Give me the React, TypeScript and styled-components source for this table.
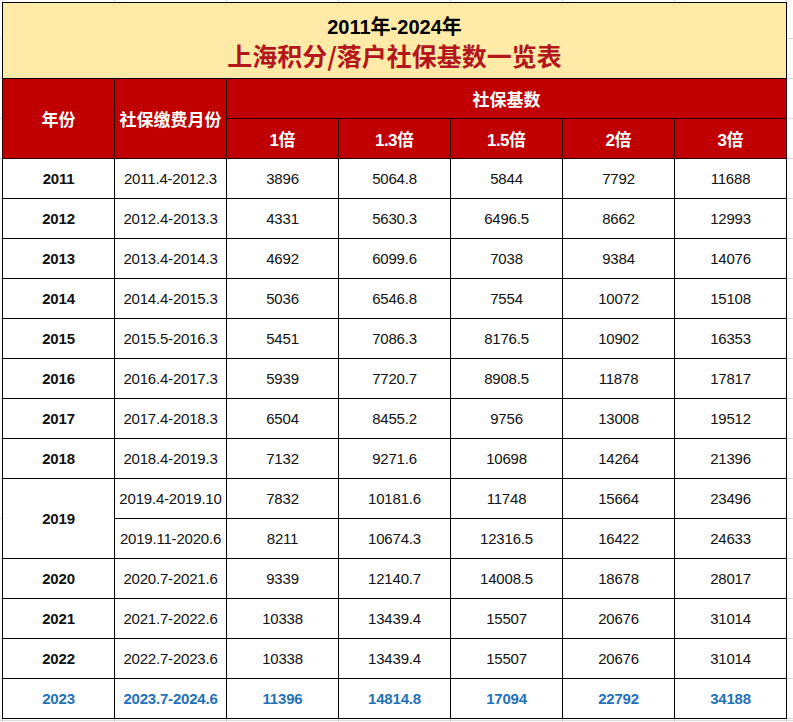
import React from "react";
import styled, { createGlobalStyle } from "styled-components";

const Global = createGlobalStyle`
  html, body { margin: 0; padding: 0; background: #fff; }
  #root { width: 793px; height: 722px; }
`;

const Page = styled.div`
  width: 793px;
  height: 722px;
  box-sizing: border-box;
  padding: 2px 0 0 2px;
  background-color: #fff;
  background-image:
    repeating-linear-gradient(to right, #d9d9d9 0 1px, transparent 1px 112px),
    repeating-linear-gradient(to bottom, #d9d9d9 0 1px, transparent 1px 40px);
  background-position: 2px 0, 0 -2px;
  overflow: hidden;
`;

const Table = styled.table`
  border-collapse: collapse;
  table-layout: fixed;
  width: 785px;
  background: #fff;
  font-family: "Liberation Sans", "Noto Sans CJK SC", sans-serif;
`;

const Col = styled.col`
  width: 112px;
`;

const TitleCell = styled.td`
  height: 75px;
  padding: 0;
  background: #ffeba7;
  border: 1px solid #000;
  text-align: center;
  vertical-align: middle;
`;

const TitleLine = styled.div<{ $main?: boolean }>`
  font-family: ${(p) =>
    p.$main
      ? `"Noto Sans CJK SC", sans-serif`
      : `"Liberation Sans", "Noto Sans CJK SC", sans-serif`};
  font-weight: 700;
  font-size: ${(p) => (p.$main ? "25px" : "20px")};
  line-height: ${(p) => (p.$main ? "32px" : "26px")};
  color: ${(p) => (p.$main ? "#b3161b" : "#000")};
  margin-top: ${(p) => (p.$main ? "-1px" : "3px")};
`;

const HeadCell = styled.th`
  height: 39px;
  padding: 0;
  background: #c00000;
  color: #fff;
  border: 1px solid #2a0000;
  font-family: "Noto Sans CJK SC", sans-serif;
  font-weight: 700;
  font-size: 17px;
  text-align: center;
  vertical-align: middle;
  white-space: nowrap;
`;

const HeadNum = styled.span`
  font-family: "Liberation Sans", sans-serif;
  font-weight: 700;
  letter-spacing: -0.5px;
`;

const Cell = styled.td<{ $bold?: boolean; $hl?: boolean }>`
  height: 39px;
  padding: 0;
  border: 1px solid #000;
  text-align: center;
  vertical-align: middle;
  font-size: 15px;
  letter-spacing: -0.2px;
  font-weight: ${(p) => (p.$bold || p.$hl ? 700 : 400)};
  color: ${(p) => (p.$hl ? "#1f72b8" : "#111")};
  white-space: nowrap;
`;

type Row = { year: string; months: string[]; vals: string[][] };

const rows: Row[] = [
  { year: "2011", months: ["2011.4-2012.3"], vals: [["3896", "5064.8", "5844", "7792", "11688"]] },
  { year: "2012", months: ["2012.4-2013.3"], vals: [["4331", "5630.3", "6496.5", "8662", "12993"]] },
  { year: "2013", months: ["2013.4-2014.3"], vals: [["4692", "6099.6", "7038", "9384", "14076"]] },
  { year: "2014", months: ["2014.4-2015.3"], vals: [["5036", "6546.8", "7554", "10072", "15108"]] },
  { year: "2015", months: ["2015.5-2016.3"], vals: [["5451", "7086.3", "8176.5", "10902", "16353"]] },
  { year: "2016", months: ["2016.4-2017.3"], vals: [["5939", "7720.7", "8908.5", "11878", "17817"]] },
  { year: "2017", months: ["2017.4-2018.3"], vals: [["6504", "8455.2", "9756", "13008", "19512"]] },
  { year: "2018", months: ["2018.4-2019.3"], vals: [["7132", "9271.6", "10698", "14264", "21396"]] },
  {
    year: "2019",
    months: ["2019.4-2019.10", "2019.11-2020.6"],
    vals: [
      ["7832", "10181.6", "11748", "15664", "23496"],
      ["8211", "10674.3", "12316.5", "16422", "24633"],
    ],
  },
  { year: "2020", months: ["2020.7-2021.6"], vals: [["9339", "12140.7", "14008.5", "18678", "28017"]] },
  { year: "2021", months: ["2021.7-2022.6"], vals: [["10338", "13439.4", "15507", "20676", "31014"]] },
  { year: "2022", months: ["2022.7-2023.6"], vals: [["10338", "13439.4", "15507", "20676", "31014"]] },
];

const last: Row = {
  year: "2023",
  months: ["2023.7-2024.6"],
  vals: [["11396", "14814.8", "17094", "22792", "34188"]],
};

const multiples = ["1", "1.3", "1.5", "2", "3"];

function renderRow(r: Row, hl = false) {
  return r.months.map((m, i) => (
    <tr key={r.year + m}>
      {i === 0 && (
        <Cell rowSpan={r.months.length} $bold $hl={hl}>
          {r.year}
        </Cell>
      )}
      <Cell $hl={hl}>{m}</Cell>
      {r.vals[i].map((v, j) => (
        <Cell key={j} $hl={hl}>
          {v}
        </Cell>
      ))}
    </tr>
  ));
}

export default function App() {
  return (
    <Page>
      <Global />
      <Table>
        <colgroup>
          {Array.from({ length: 7 }).map((_, i) => (
            <Col key={i} />
          ))}
        </colgroup>
        <tbody>
          <tr>
            <TitleCell colSpan={7}>
              <TitleLine>2011年-2024年</TitleLine>
              <TitleLine $main>上海积分/落户社保基数一览表</TitleLine>
            </TitleCell>
          </tr>
          <tr>
            <HeadCell rowSpan={2}>年份</HeadCell>
            <HeadCell rowSpan={2}>社保缴费月份</HeadCell>
            <HeadCell colSpan={5}>社保基数</HeadCell>
          </tr>
          <tr>
            {multiples.map((m) => (
              <HeadCell key={m}>
                <HeadNum>{m}</HeadNum>倍
              </HeadCell>
            ))}
          </tr>
          {rows.map((r) => renderRow(r))}
          {renderRow(last, true)}
        </tbody>
      </Table>
    </Page>
  );
}
